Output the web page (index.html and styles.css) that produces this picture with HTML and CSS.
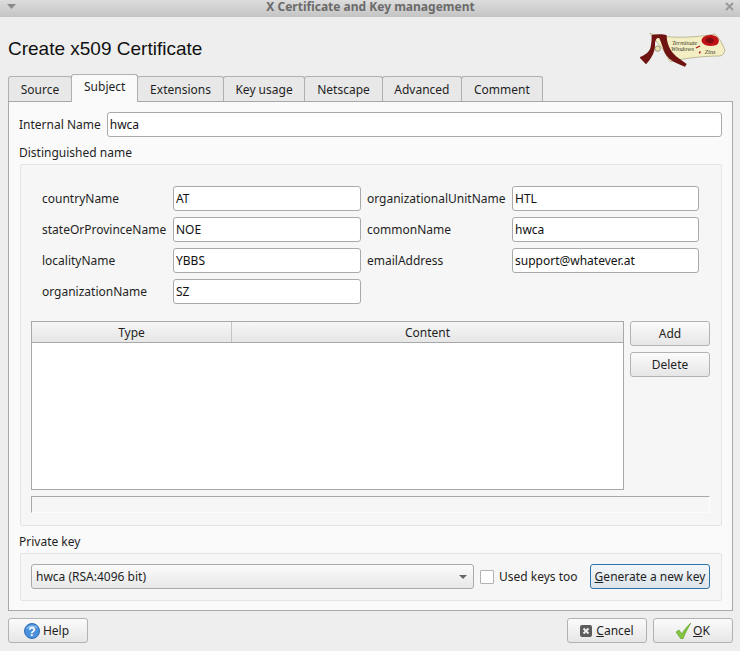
FILE: index.html
```html
<!DOCTYPE html>
<html lang="en">
<head>
<meta charset="UTF-8" />
<title>X Certificate and Key management</title>
<link rel="stylesheet" href="styles.css">
</head>
<body>
<header class="titlebar">
  <svg class="menu-arrow" width="9" height="5" viewBox="0 0 9 5"><path d="M0 0h9L4.500 5z" fill="#8a8a8a"/></svg>
  <span class="titlebar-text">X Certificate and Key management</span>
  <svg class="close-x" width="9" height="9" viewBox="0 0 9 9"><path d="M1 1l7 7M8 1l-7 7" stroke="#9a9a9a" stroke-width="2"/></svg>
</header>
<main class="dialog">
  <div class="heading">
    <h1>Create x509 Certificate</h1>
    <svg class="logo" width="88" height="38" viewBox="60 30 264 114">
      <path d="M90 40C120 52 200 58 285 42C298 55 310 75 315 92C312 102 305 108 298 108C250 108 190 115 150 125L130 90Z" fill="#f3eec4" stroke="#a39f74" stroke-width="2"/>
      <path d="M95 45C110 42 130 42 140 46C140 70 150 95 170 110L200 132L195 140C170 130 150 125 135 100C128 85 125 70 118 55C110 50 105 60 105 75C105 95 95 115 78 133L58 112C75 105 90 95 92 80C95 65 95 55 95 45Z" fill="#6e1212"/>
      <circle cx="113" cy="86" r="8" fill="#e8e2b4" stroke="#77744f" stroke-width="2"/>
      <path d="M246 56C254 44 276 42 290 50C300 58 298 72 286 76C272 80 254 78 247 68C244 64 244 60 246 56Z" fill="#c01116"/>
      <path d="M258 58C264 52 276 52 280 58C283 64 278 70 270 70C262 70 255 65 258 58Z" fill="#7d0d10"/>
      <path d="M228 84L240 78M238 100L241 94" stroke="#a8141a" stroke-width="4"/>
      <text x="156" y="76" class="logo-text">Terminate</text>
      <text x="153" y="94" class="logo-text">Windows</text>
      <text x="254" y="102" class="logo-text">Zins</text>
    </svg>
  </div>

  <div class="tabs">
    <span class="tab">Source</span>
    <span class="tab tab-active">Subject</span>
    <span class="tab">Extensions</span>
    <span class="tab">Key usage</span>
    <span class="tab">Netscape</span>
    <span class="tab">Advanced</span>
    <span class="tab">Comment</span>
  </div>

  <section class="pane">
    <div class="internal-name">
      <label>Internal Name</label>
      <div class="input">hwca</div>
    </div>

    <div class="group-title">Distinguished name</div>
    <div class="group dn-group">
      <div class="fields">
        <label>countryName</label><div class="input">AT</div>
        <label>organizationalUnitName</label><div class="input">HTL</div>
        <label>stateOrProvinceName</label><div class="input">NOE</div>
        <label>commonName</label><div class="input">hwca</div>
        <label>localityName</label><div class="input">YBBS</div>
        <label>emailAddress</label><div class="input">support@whatever.at</div>
        <label>organizationName</label><div class="input">SZ</div>
      </div>

      <div class="table-row">
        <div class="table">
          <div class="table-head">
            <span class="col-type">Type</span>
            <span class="col-content">Content</span>
          </div>
        </div>
        <div class="side-buttons">
          <button class="btn">Add</button>
          <button class="btn">Delete</button>
        </div>
      </div>
      <div class="status"></div>
    </div>

    <div class="group-title key-title">Private key</div>
    <div class="group key-group">
      <div class="combo">
        <span>hwca (RSA:4096 bit)</span>
        <svg width="8" height="4" viewBox="0 0 8 4"><path d="M0 0h8L4 4z" fill="#666"/></svg>
      </div>
      <span class="checkbox"></span>
      <span class="check-label">Used keys too</span>
      <button class="btn btn-focus"><span><u>G</u>enerate a new key</span></button>
    </div>
  </section>

  <footer class="actions">
    <button class="btn btn-wide btn-help">
      <svg width="16" height="16" viewBox="0 0 16 16"><circle cx="8" cy="8" r="7.500" fill="#4a90dc" stroke="#2f6db5" stroke-width="1"/><path d="M2 6c2-4 9-5 12-1-4-1-8-1-12 1z" fill="#9cc8f2"/><text x="8" y="12.500" class="help-mark">?</text></svg>
      <span>Help</span>
    </button>
    <span class="spacer"></span>
    <button class="btn btn-wide">
      <svg width="12" height="12" viewBox="0 0 12 12"><rect width="12" height="12" rx="2" fill="#5c5c5c"/><path d="M3.500 3.500l5 5M8.500 3.500l-5 5" stroke="#eee" stroke-width="2"/></svg>
      <span><u>C</u>ancel</span>
    </button>
    <button class="btn btn-wide btn-ok">
      <svg width="15" height="16" viewBox="0 0 15 16"><path d="M0 9l3-2 3 4c2-4 5-8 9-11-3 5-6 10-8 16H5z" fill="#83c440" stroke="#5c9a25" stroke-width=".6"/></svg>
      <span><u>O</u>K</span>
    </button>
  </footer>
</main>
</body>
</html>
```

FILE: styles.css
```css
html, body {
  margin: 0;
  padding: 0;
}

body {
  width: 740px;
  height: 651px;
  overflow: hidden;
  background-color: #eeeeee;
  color: #1f1f1f;
  font-family: "Noto Sans", sans-serif;
  font-size: 12px;
}

.titlebar {
  height: 17px;
  box-sizing: border-box;
  display: flex;
  align-items: center;
  justify-content: space-between;
  padding: 0 6px 4px 7px;
  background: linear-gradient(#dcdcdc, #c4c4c4);
}

.titlebar-text {
  font-weight: bold;
  color: #6b6b6b;
  line-height: 13px;
}

.dialog {
  padding: 0 7px 0 8px;
}

.heading {
  height: 59px;
  display: flex;
  justify-content: space-between;
  align-items: flex-start;
}

.heading h1 {
  margin: 21px 0 0 0;
  font-family: "Liberation Sans", sans-serif;
  font-size: 19px;
  font-weight: normal;
  line-height: 22px;
  color: #111;
}

.logo {
  margin: 13px 5px 0 0;
}

.logo-text {
  font-family: "Liberation Serif", serif;
  font-style: italic;
  font-size: 19px;
  fill: #3c3a2a;
}

.tabs {
  display: flex;
  align-items: flex-end;
  height: 25px;
  position: relative;
  z-index: 1;
}

.tab {
  height: 25px;
  box-sizing: border-box;
  line-height: 25px;
  padding: 0 11.750px;
  margin-right: -1px;
  border: 1px solid #b0b0b0;
  border-bottom: none;
  border-radius: 3px 3px 0 0;
  background-color: #e8e8e8;
}

.tab-active {
  height: 28px;
  line-height: 24px;
  padding: 0 12px;
  margin-bottom: -1px;
  background-color: #fafafa;
  position: relative;
}

.pane {
  height: 510px;
  box-sizing: border-box;
  border: 1px solid #a8a8a8;
  background-color: #fafafa;
  padding: 10px 10px 0 11px;
}

.internal-name {
  display: flex;
  align-items: center;
  gap: 6px;
}

.internal-name label {
  margin-left: -1px;
}

.internal-name .input {
  flex: 1;
}

.input {
  height: 25px;
  box-sizing: border-box;
  padding: 0 2px;
  line-height: 23px;
  border: 1px solid #aaaaaa;
  border-radius: 3px;
  background-color: #ffffff;
  color: #111;
}

.group-title {
  margin: 7px 0 0 -1px;
  height: 20px;
  line-height: 18px;
}

.group {
  box-sizing: border-box;
  border: 1px solid #e4e4e4;
  border-radius: 2px;
  background-color: #f6f6f6;
}

.dn-group {
  height: 362px;
  padding: 21px 11px 0 10px;
}

.fields {
  display: grid;
  grid-template-columns: 131px 188px 151px 187px;
  grid-auto-rows: 25px;
  row-gap: 6px;
  align-items: center;
  padding-left: 11px;
}

.fields label:nth-of-type(even) {
  margin-left: 6px;
}

.table-row {
  display: flex;
  gap: 6px;
  margin-top: 17px;
}

.table {
  width: 593px;
  height: 169px;
  box-sizing: border-box;
  border: 1px solid #a8a8a8;
  background-color: #ffffff;
}

.table-head {
  display: flex;
  height: 21px;
  line-height: 22px;
  box-sizing: border-box;
  border-bottom: 1px solid #a8a8a8;
  background: linear-gradient(#f6f6f6, #e6e6e6);
  text-align: center;
}

.col-type {
  width: 199px;
  border-right: 1px solid #c4c4c4;
}

.col-content {
  flex: 1;
}

.side-buttons {
  display: flex;
  flex-direction: column;
  gap: 6px;
}

.btn {
  width: 80px;
  height: 25px;
  padding: 0;
  box-sizing: border-box;
  display: flex;
  align-items: center;
  justify-content: center;
  gap: 3px;
  border: 1px solid #b2b2b2;
  border-radius: 3px;
  background: linear-gradient(#fbfbfb, #e6e6e6);
  color: #1f1f1f;
  font-family: inherit;
  font-size: inherit;
}

.status {
  width: 679px;
  height: 17px;
  margin-top: 6px;
  box-sizing: border-box;
  border-top: 1px solid #a8a8a8;
  border-left: 1px solid #a8a8a8;
  border-right: 1px solid #fcfcfc;
  border-bottom: 1px solid #fcfcfc;
}

.key-title {
  margin-top: 0;
  height: 27px;
  line-height: 32px;
}

.key-group {
  height: 48px;
  display: flex;
  align-items: center;
  padding: 0 11px 1px 10px;
}

.combo {
  flex: none;
  width: 443px;
  height: 25px;
  box-sizing: border-box;
  display: flex;
  align-items: center;
  justify-content: space-between;
  padding: 0 6px 0 4px;
  border: 1px solid #aaaaaa;
  border-radius: 3px;
  background: linear-gradient(#fbfbfb, #e8e8e8);
}

.checkbox {
  flex: none;
  width: 12px;
  height: 12px;
  margin-left: 6px;
  border: 1px solid #b2b2b2;
  border-radius: 1px;
  background-color: #ffffff;
}

.check-label {
  margin-left: 5px;
  white-space: nowrap;
}

.btn-focus {
  flex: none;
  margin-left: auto;
  width: 120px;
  border-color: #2f74a8;
  background: linear-gradient(#f4f7f9, #dbe4ea);
  white-space: nowrap;
}

.actions {
  display: flex;
  gap: 6px;
  margin-top: 7px;
}

.spacer {
  flex: 1;
}

.btn-wide {
  width: 80px;
  gap: 4px;
}

.btn-help {
  gap: 3px;
  padding-right: 3px;
}

.btn-ok {
  gap: 2px;
}

.help-mark {
  fill: #ffffff;
  font-family: "Liberation Sans", sans-serif;
  font-size: 12px;
  font-weight: bold;
  text-anchor: middle;
}
```
